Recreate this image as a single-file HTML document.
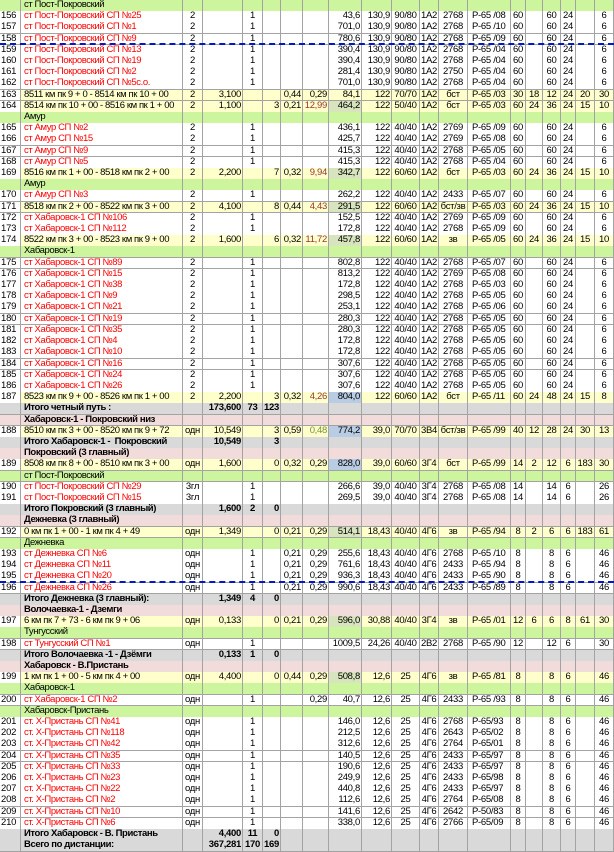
<!DOCTYPE html>
<html><head><meta charset="utf-8"><style>
*{margin:0;padding:0;box-sizing:border-box}
body{width:614px;height:852px;overflow:hidden;background:#fff;font-family:"Liberation Sans",Arial,sans-serif;font-size:9.5px;color:#000;position:relative}
.R{display:grid;grid-template-columns:21px 162px 20px 40px 20px 18px 22px 26px 33px 30px 28px 19px 29px 43px 15px 17px 18px 15px 19px 19px;height:11.21px}
.R i{font-style:normal;border-right:1px solid #a3a3a3;border-bottom:1px solid #a3a3a3;line-height:10.8px;white-space:nowrap;overflow:visible;padding:0 1px;text-align:center;font-size:9.5px;letter-spacing:-0.3px}
.R i:nth-child(1){text-align:left;background:#fff;font-size:9.5px;letter-spacing:-0.2px}
.R i:nth-child(2){text-align:left;padding-left:3px;overflow:visible;position:relative;z-index:1;letter-spacing:-0.4px}
.R i:nth-child(4),.R i:nth-child(6),.R i:nth-child(7),.R i:nth-child(8),.R i:nth-child(9),.R i:nth-child(10){text-align:right}
.R i:nth-child(14){text-align:left;padding-left:4px}
.g i{background:#ccf59e}.y i{background:#ffffcc}.t i{background:#d9d9d9;font-weight:bold}.p i{background:#f2dcdb;font-weight:bold}.w i{background:#fff}
.g i:nth-child(1),.y i:nth-child(1),.w i:nth-child(1){background:#fff}
.t i:nth-child(1){background:#d9d9d9}
.p i:nth-child(1){background:#f2dcdb}
.g i:nth-child(1){background:#ccf59e}
.r{color:#f00}
.R i.d{color:#963634}.R i.dg{color:#76923c}
.R i.hb{background:#b8cce4}.R i.hg{background:#d7e4bd}
.dash{position:absolute;left:0;width:614px;border-top:2px dashed #0018c8;z-index:5}
</style></head><body>
<div class="R g"><i></i><i>ст Пост-Покровский</i><i></i><i></i><i></i><i></i><i></i><i></i><i></i><i></i><i></i><i></i><i></i><i></i><i></i><i></i><i></i><i></i><i></i><i></i></div>
<div class="R w"><i>156</i><i class="r">ст Пост-Покровский СП №25</i><i>2</i><i></i><i>1</i><i></i><i></i><i></i><i>43,6</i><i>130,9</i><i>90/80</i><i>1А2</i><i>2768</i><i>Р-65 /08</i><i>60</i><i></i><i>60</i><i>24</i><i></i><i>6</i></div>
<div class="R w"><i>157</i><i class="r">ст Пост-Покровский СП №1</i><i>2</i><i></i><i>1</i><i></i><i></i><i></i><i>701,0</i><i>130,9</i><i>90/80</i><i>1А2</i><i>2768</i><i>Р-65 /10</i><i>60</i><i></i><i>60</i><i>24</i><i></i><i>6</i></div>
<div class="R w"><i>158</i><i class="r">ст Пост-Покровский СП №9</i><i>2</i><i></i><i>1</i><i></i><i></i><i></i><i>780,6</i><i>130,9</i><i>90/80</i><i>1А2</i><i>2768</i><i>Р-65 /09</i><i>60</i><i></i><i>60</i><i>24</i><i></i><i>6</i></div>
<div class="R w"><i>159</i><i class="r">ст Пост-Покровский СП №13</i><i>2</i><i></i><i>1</i><i></i><i></i><i></i><i>390,4</i><i>130,9</i><i>90/80</i><i>1А2</i><i>2768</i><i>Р-65 /04</i><i>60</i><i></i><i>60</i><i>24</i><i></i><i>6</i></div>
<div class="R w"><i>160</i><i class="r">ст Пост-Покровский СП №19</i><i>2</i><i></i><i>1</i><i></i><i></i><i></i><i>390,4</i><i>130,9</i><i>90/80</i><i>1А2</i><i>2768</i><i>Р-65 /04</i><i>60</i><i></i><i>60</i><i>24</i><i></i><i>6</i></div>
<div class="R w"><i>161</i><i class="r">ст Пост-Покровский СП №2</i><i>2</i><i></i><i>1</i><i></i><i></i><i></i><i>281,4</i><i>130,9</i><i>90/80</i><i>1А2</i><i>2750</i><i>Р-65 /04</i><i>60</i><i></i><i>60</i><i>24</i><i></i><i>6</i></div>
<div class="R w"><i>162</i><i class="r">ст Пост-Покровский СП №5с.о.</i><i>2</i><i></i><i>1</i><i></i><i></i><i></i><i>701,0</i><i>130,9</i><i>90/80</i><i>1А2</i><i>2768</i><i>Р-65 /04</i><i>60</i><i></i><i>60</i><i>24</i><i></i><i>6</i></div>
<div class="R y"><i>163</i><i>8511 км пк 9 + 0 - 8514 км пк 10 + 00</i><i>2</i><i>3,100</i><i></i><i></i><i>0,44</i><i>0,29</i><i>84,1</i><i>122</i><i>70/70</i><i>1А2</i><i>бст</i><i>Р-65 /03</i><i>30</i><i>18</i><i>12</i><i>24</i><i>20</i><i>30</i></div>
<div class="R y"><i>164</i><i>8514 км пк 10 + 00 - 8516 км пк 1 + 00</i><i>2</i><i>1,100</i><i></i><i>3</i><i>0,21</i><i class="d">12,99</i><i class="hg">464,2</i><i>122</i><i>50/40</i><i>1А2</i><i>бст</i><i>Р-65 /03</i><i>60</i><i>24</i><i>36</i><i>24</i><i>15</i><i>10</i></div>
<div class="R g"><i></i><i>Амур</i><i></i><i></i><i></i><i></i><i></i><i></i><i></i><i></i><i></i><i></i><i></i><i></i><i></i><i></i><i></i><i></i><i></i><i></i></div>
<div class="R w"><i>165</i><i class="r">ст Амур СП №2</i><i>2</i><i></i><i>1</i><i></i><i></i><i></i><i>436,1</i><i>122</i><i>40/40</i><i>1А2</i><i>2769</i><i>Р-65 /09</i><i>60</i><i></i><i>60</i><i>24</i><i></i><i>6</i></div>
<div class="R w"><i>166</i><i class="r">ст Амур СП №15</i><i>2</i><i></i><i>1</i><i></i><i></i><i></i><i>425,7</i><i>122</i><i>40/40</i><i>1А2</i><i>2769</i><i>Р-65 /08</i><i>60</i><i></i><i>60</i><i>24</i><i></i><i>6</i></div>
<div class="R w"><i>167</i><i class="r">ст Амур СП №9</i><i>2</i><i></i><i>1</i><i></i><i></i><i></i><i>415,3</i><i>122</i><i>40/40</i><i>1А2</i><i>2768</i><i>Р-65 /05</i><i>60</i><i></i><i>60</i><i>24</i><i></i><i>6</i></div>
<div class="R w"><i>168</i><i class="r">ст Амур СП №5</i><i>2</i><i></i><i>1</i><i></i><i></i><i></i><i>415,3</i><i>122</i><i>40/40</i><i>1А2</i><i>2768</i><i>Р-65 /04</i><i>60</i><i></i><i>60</i><i>24</i><i></i><i>6</i></div>
<div class="R y"><i>169</i><i>8516 км пк 1 + 00 - 8518 км пк 2 + 00</i><i>2</i><i>2,200</i><i></i><i>7</i><i>0,32</i><i class="d">9,94</i><i class="hg">342,7</i><i>122</i><i>60/60</i><i>1А2</i><i>бст</i><i>Р-65 /03</i><i>60</i><i>24</i><i>36</i><i>24</i><i>15</i><i>10</i></div>
<div class="R g"><i></i><i>Амур</i><i></i><i></i><i></i><i></i><i></i><i></i><i></i><i></i><i></i><i></i><i></i><i></i><i></i><i></i><i></i><i></i><i></i><i></i></div>
<div class="R w"><i>170</i><i class="r">ст Амур СП №3</i><i>2</i><i></i><i>1</i><i></i><i></i><i></i><i>262,2</i><i>122</i><i>40/40</i><i>1А2</i><i>2433</i><i>Р-65 /07</i><i>60</i><i></i><i>60</i><i>24</i><i></i><i>6</i></div>
<div class="R y"><i>171</i><i>8518 км пк 2 + 00 - 8522 км пк 3 + 00</i><i>2</i><i>4,100</i><i></i><i>8</i><i>0,44</i><i class="d">4,43</i><i class="hg">291,5</i><i>122</i><i>60/60</i><i>1А2</i><i>бст/зв</i><i>Р-65 /03</i><i>60</i><i>24</i><i>36</i><i>24</i><i>15</i><i>10</i></div>
<div class="R w"><i>172</i><i class="r">ст Хабаровск-1 СП №106</i><i>2</i><i></i><i>1</i><i></i><i></i><i></i><i>152,5</i><i>122</i><i>40/40</i><i>1А2</i><i>2769</i><i>Р-65 /09</i><i>60</i><i></i><i>60</i><i>24</i><i></i><i>6</i></div>
<div class="R w"><i>173</i><i class="r">ст Хабаровск-1 СП №112</i><i>2</i><i></i><i>1</i><i></i><i></i><i></i><i>172,8</i><i>122</i><i>40/40</i><i>1А2</i><i>2768</i><i>Р-65 /09</i><i>60</i><i></i><i>60</i><i>24</i><i></i><i>6</i></div>
<div class="R y"><i>174</i><i>8522 км пк 3 + 00 - 8523 км пк 9 + 00</i><i>2</i><i>1,600</i><i></i><i>6</i><i>0,32</i><i class="d">11,72</i><i class="hg">457,8</i><i>122</i><i>60/60</i><i>1А2</i><i>зв</i><i>Р-65 /05</i><i>60</i><i>24</i><i>36</i><i>24</i><i>15</i><i>10</i></div>
<div class="R g"><i></i><i>Хабаровск-1</i><i></i><i></i><i></i><i></i><i></i><i></i><i></i><i></i><i></i><i></i><i></i><i></i><i></i><i></i><i></i><i></i><i></i><i></i></div>
<div class="R w"><i>175</i><i class="r">ст Хабаровск-1 СП №89</i><i>2</i><i></i><i>1</i><i></i><i></i><i></i><i>802,8</i><i>122</i><i>40/40</i><i>1А2</i><i>2768</i><i>Р-65 /07</i><i>60</i><i></i><i>60</i><i>24</i><i></i><i>6</i></div>
<div class="R w"><i>176</i><i class="r">ст Хабаровск-1 СП №15</i><i>2</i><i></i><i>1</i><i></i><i></i><i></i><i>813,2</i><i>122</i><i>40/40</i><i>1А2</i><i>2769</i><i>Р-65 /08</i><i>60</i><i></i><i>60</i><i>24</i><i></i><i>6</i></div>
<div class="R w"><i>177</i><i class="r">ст Хабаровск-1 СП №38</i><i>2</i><i></i><i>1</i><i></i><i></i><i></i><i>172,8</i><i>122</i><i>40/40</i><i>1А2</i><i>2768</i><i>Р-65 /03</i><i>60</i><i></i><i>60</i><i>24</i><i></i><i>6</i></div>
<div class="R w"><i>178</i><i class="r">ст Хабаровск-1 СП №9</i><i>2</i><i></i><i>1</i><i></i><i></i><i></i><i>298,5</i><i>122</i><i>40/40</i><i>1А2</i><i>2768</i><i>Р-65 /05</i><i>60</i><i></i><i>60</i><i>24</i><i></i><i>6</i></div>
<div class="R w"><i>179</i><i class="r">ст Хабаровск-1 СП №21</i><i>2</i><i></i><i>1</i><i></i><i></i><i></i><i>253,1</i><i>122</i><i>40/40</i><i>1А2</i><i>2768</i><i>Р-65 /06</i><i>60</i><i></i><i>60</i><i>24</i><i></i><i>6</i></div>
<div class="R w"><i>180</i><i class="r">ст Хабаровск-1 СП №19</i><i>2</i><i></i><i>1</i><i></i><i></i><i></i><i>280,3</i><i>122</i><i>40/40</i><i>1А2</i><i>2768</i><i>Р-65 /05</i><i>60</i><i></i><i>60</i><i>24</i><i></i><i>6</i></div>
<div class="R w"><i>181</i><i class="r">ст Хабаровск-1 СП №35</i><i>2</i><i></i><i>1</i><i></i><i></i><i></i><i>280,3</i><i>122</i><i>40/40</i><i>1А2</i><i>2768</i><i>Р-65 /05</i><i>60</i><i></i><i>60</i><i>24</i><i></i><i>6</i></div>
<div class="R w"><i>182</i><i class="r">ст Хабаровск-1 СП №4</i><i>2</i><i></i><i>1</i><i></i><i></i><i></i><i>172,8</i><i>122</i><i>40/40</i><i>1А2</i><i>2768</i><i>Р-65 /05</i><i>60</i><i></i><i>60</i><i>24</i><i></i><i>6</i></div>
<div class="R w"><i>183</i><i class="r">ст Хабаровск-1 СП №10</i><i>2</i><i></i><i>1</i><i></i><i></i><i></i><i>172,8</i><i>122</i><i>40/40</i><i>1А2</i><i>2768</i><i>Р-65 /05</i><i>60</i><i></i><i>60</i><i>24</i><i></i><i>6</i></div>
<div class="R w"><i>184</i><i class="r">ст Хабаровск-1 СП №16</i><i>2</i><i></i><i>1</i><i></i><i></i><i></i><i>307,6</i><i>122</i><i>40/40</i><i>1А2</i><i>2768</i><i>Р-65 /05</i><i>60</i><i></i><i>60</i><i>24</i><i></i><i>6</i></div>
<div class="R w"><i>185</i><i class="r">ст Хабаровск-1 СП №24</i><i>2</i><i></i><i>1</i><i></i><i></i><i></i><i>307,6</i><i>122</i><i>40/40</i><i>1А2</i><i>2768</i><i>Р-65 /05</i><i>60</i><i></i><i>60</i><i>24</i><i></i><i>6</i></div>
<div class="R w"><i>186</i><i class="r">ст Хабаровск-1 СП №26</i><i>2</i><i></i><i>1</i><i></i><i></i><i></i><i>307,6</i><i>122</i><i>40/40</i><i>1А2</i><i>2768</i><i>Р-65 /05</i><i>60</i><i></i><i>60</i><i>24</i><i></i><i>6</i></div>
<div class="R y"><i>187</i><i>8523 км пк 9 + 00 - 8526 км пк 1 + 00</i><i>2</i><i>2,200</i><i></i><i>3</i><i>0,32</i><i class="d">4,26</i><i class="hb">804,0</i><i>122</i><i>60/60</i><i>1А2</i><i>бст</i><i>Р-65 /11</i><i>60</i><i>24</i><i>48</i><i>24</i><i>15</i><i>8</i></div>
<div class="R t"><i></i><i>Итого четный путь :</i><i></i><i>173,600</i><i>73</i><i>123</i><i></i><i></i><i></i><i></i><i></i><i></i><i></i><i></i><i></i><i></i><i></i><i></i><i></i><i></i></div>
<div class="R p"><i></i><i>Хабаровск-1 - Покровский низ</i><i></i><i></i><i></i><i></i><i></i><i></i><i></i><i></i><i></i><i></i><i></i><i></i><i></i><i></i><i></i><i></i><i></i><i></i></div>
<div class="R y"><i>188</i><i>8510 км пк 3 + 00 - 8520 км пк 9 + 72</i><i>одн</i><i>10,549</i><i></i><i>3</i><i>0,59</i><i class="dg">0,48</i><i class="hb">774,2</i><i>39,0</i><i>70/70</i><i>3В4</i><i>бст/зв</i><i>Р-65 /99</i><i>40</i><i>12</i><i>28</i><i>24</i><i>30</i><i>13</i></div>
<div class="R t"><i></i><i>Итого Хабаровск-1 -&nbsp; Покровский</i><i></i><i>10,549</i><i></i><i>3</i><i></i><i></i><i></i><i></i><i></i><i></i><i></i><i></i><i></i><i></i><i></i><i></i><i></i><i></i></div>
<div class="R p"><i></i><i>Покровский (3 главный)</i><i></i><i></i><i></i><i></i><i></i><i></i><i></i><i></i><i></i><i></i><i></i><i></i><i></i><i></i><i></i><i></i><i></i><i></i></div>
<div class="R y"><i>189</i><i>8508 км пк 8 + 00 - 8510 км пк 3 + 00</i><i>одн</i><i>1,600</i><i></i><i>0</i><i>0,32</i><i>0,29</i><i class="hb">828,0</i><i>39,0</i><i>60/60</i><i>3Г4</i><i>бст</i><i>Р-65 /99</i><i>14</i><i>2</i><i>12</i><i>6</i><i>183</i><i>30</i></div>
<div class="R g"><i></i><i>ст Пост-Покровский</i><i></i><i></i><i></i><i></i><i></i><i></i><i></i><i></i><i></i><i></i><i></i><i></i><i></i><i></i><i></i><i></i><i></i><i></i></div>
<div class="R w"><i>190</i><i class="r">ст Пост-Покровский СП №29</i><i>3гл</i><i></i><i>1</i><i></i><i></i><i></i><i>266,6</i><i>39,0</i><i>40/40</i><i>3Г4</i><i>2768</i><i>Р-65 /08</i><i>14</i><i></i><i>14</i><i>6</i><i></i><i>26</i></div>
<div class="R w"><i>191</i><i class="r">ст Пост-Покровский СП №15</i><i>3гл</i><i></i><i>1</i><i></i><i></i><i></i><i>269,5</i><i>39,0</i><i>40/40</i><i>3Г4</i><i>2768</i><i>Р-65 /08</i><i>14</i><i></i><i>14</i><i>6</i><i></i><i>26</i></div>
<div class="R t"><i></i><i>Итого Покровский (3 главный)</i><i></i><i>1,600</i><i>2</i><i>0</i><i></i><i></i><i></i><i></i><i></i><i></i><i></i><i></i><i></i><i></i><i></i><i></i><i></i><i></i></div>
<div class="R p"><i></i><i>Дежневка (3 главный)</i><i></i><i></i><i></i><i></i><i></i><i></i><i></i><i></i><i></i><i></i><i></i><i></i><i></i><i></i><i></i><i></i><i></i><i></i></div>
<div class="R y"><i>192</i><i>0 км пк 1 + 00 - 1 км пк 4 + 49</i><i>одн</i><i>1,349</i><i></i><i>0</i><i>0,21</i><i>0,29</i><i class="hg">514,1</i><i>18,43</i><i>40/40</i><i>4Г6</i><i>зв</i><i>Р-65 /94</i><i>8</i><i>2</i><i>6</i><i>6</i><i>183</i><i>61</i></div>
<div class="R g"><i></i><i>Дежневка</i><i></i><i></i><i></i><i></i><i></i><i></i><i></i><i></i><i></i><i></i><i></i><i></i><i></i><i></i><i></i><i></i><i></i><i></i></div>
<div class="R w"><i>193</i><i class="r">ст Дежневка СП №6</i><i>одн</i><i></i><i>1</i><i></i><i>0,21</i><i>0,29</i><i>255,6</i><i>18,43</i><i>40/40</i><i>4Г6</i><i>2768</i><i>Р-65 /10</i><i>8</i><i></i><i>8</i><i>6</i><i></i><i>46</i></div>
<div class="R w"><i>194</i><i class="r">ст Дежневка СП №11</i><i>одн</i><i></i><i>1</i><i></i><i>0,21</i><i>0,29</i><i>761,6</i><i>18,43</i><i>40/40</i><i>4Г6</i><i>2433</i><i>Р-65 /94</i><i>8</i><i></i><i>8</i><i>6</i><i></i><i>46</i></div>
<div class="R w"><i>195</i><i class="r">ст Дежневка СП №20</i><i>одн</i><i></i><i>1</i><i></i><i>0,21</i><i>0,29</i><i>936,3</i><i>18,43</i><i>40/40</i><i>4Г6</i><i>2433</i><i>Р-65 /90</i><i>8</i><i></i><i>8</i><i>6</i><i></i><i>46</i></div>
<div class="R w"><i>196</i><i class="r">ст Дежневка СП №26</i><i>одн</i><i></i><i>1</i><i></i><i>0,21</i><i>0,29</i><i>990,6</i><i>18,43</i><i>40/40</i><i>4Г6</i><i>2433</i><i>Р-65 /89</i><i>8</i><i></i><i>8</i><i>6</i><i></i><i>46</i></div>
<div class="R t"><i></i><i>Итого Дежневка (3 главный):</i><i></i><i>1,349</i><i>4</i><i>0</i><i></i><i></i><i></i><i></i><i></i><i></i><i></i><i></i><i></i><i></i><i></i><i></i><i></i><i></i></div>
<div class="R p"><i></i><i>Волочаевка-1 - Дземги</i><i></i><i></i><i></i><i></i><i></i><i></i><i></i><i></i><i></i><i></i><i></i><i></i><i></i><i></i><i></i><i></i><i></i><i></i></div>
<div class="R y"><i>197</i><i>6 км пк 7 + 73 - 6 км пк 9 + 06</i><i>одн</i><i>0,133</i><i></i><i>0</i><i>0,21</i><i>0,29</i><i class="hg">596,0</i><i>30,88</i><i>40/40</i><i>3Г4</i><i>зв</i><i>Р-65 /01</i><i>12</i><i>6</i><i>6</i><i>8</i><i>61</i><i>30</i></div>
<div class="R g"><i></i><i>Тунгусский</i><i></i><i></i><i></i><i></i><i></i><i></i><i></i><i></i><i></i><i></i><i></i><i></i><i></i><i></i><i></i><i></i><i></i><i></i></div>
<div class="R w"><i>198</i><i class="r">ст Тунгусский СП №1</i><i>одн</i><i></i><i>1</i><i></i><i></i><i></i><i>1009,5</i><i>24,26</i><i>40/40</i><i>2В2</i><i>2768</i><i>Р-65 /90</i><i>12</i><i></i><i>12</i><i>6</i><i></i><i>30</i></div>
<div class="R t"><i></i><i>Итого Волочаевка -1 - Дзёмги</i><i></i><i>0,133</i><i>1</i><i>0</i><i></i><i></i><i></i><i></i><i></i><i></i><i></i><i></i><i></i><i></i><i></i><i></i><i></i><i></i></div>
<div class="R p"><i></i><i>Хабаровск - В.Пристань</i><i></i><i></i><i></i><i></i><i></i><i></i><i></i><i></i><i></i><i></i><i></i><i></i><i></i><i></i><i></i><i></i><i></i><i></i></div>
<div class="R y"><i>199</i><i>1 км пк 1 + 00 - 5 км пк 4 + 00</i><i>одн</i><i>4,400</i><i></i><i>0</i><i>0,44</i><i>0,29</i><i class="hg">508,8</i><i>12,6</i><i>25</i><i>4Г6</i><i>зв</i><i>Р-65 /81</i><i>8</i><i></i><i>8</i><i>6</i><i></i><i>46</i></div>
<div class="R g"><i></i><i>Хабаровск-1</i><i></i><i></i><i></i><i></i><i></i><i></i><i></i><i></i><i></i><i></i><i></i><i></i><i></i><i></i><i></i><i></i><i></i><i></i></div>
<div class="R w"><i>200</i><i class="r">ст Хабаровск-1 СП №2</i><i>одн</i><i></i><i>1</i><i></i><i></i><i>0,29</i><i>40,7</i><i>12,6</i><i>25</i><i>4Г6</i><i>2433</i><i>Р-65 /93</i><i>8</i><i></i><i>8</i><i>6</i><i></i><i>46</i></div>
<div class="R g"><i></i><i>Хабаровск-Пристань</i><i></i><i></i><i></i><i></i><i></i><i></i><i></i><i></i><i></i><i></i><i></i><i></i><i></i><i></i><i></i><i></i><i></i><i></i></div>
<div class="R w"><i>201</i><i class="r">ст. Х-Пристань СП №41</i><i>одн</i><i></i><i>1</i><i></i><i></i><i></i><i>146,0</i><i>12,6</i><i>25</i><i>4Г6</i><i>2768</i><i>Р-65/93</i><i>8</i><i></i><i>8</i><i>6</i><i></i><i>46</i></div>
<div class="R w"><i>202</i><i class="r">ст. Х-Пристань СП №118</i><i>одн</i><i></i><i>1</i><i></i><i></i><i></i><i>212,5</i><i>12,6</i><i>25</i><i>4Г6</i><i>2643</i><i>Р-65/02</i><i>8</i><i></i><i>8</i><i>6</i><i></i><i>46</i></div>
<div class="R w"><i>203</i><i class="r">ст. Х-Пристань СП №42</i><i>одн</i><i></i><i>1</i><i></i><i></i><i></i><i>312,6</i><i>12,6</i><i>25</i><i>4Г6</i><i>2764</i><i>Р-65/01</i><i>8</i><i></i><i>8</i><i>6</i><i></i><i>46</i></div>
<div class="R w"><i>204</i><i class="r">ст. Х-Пристань СП №35</i><i>одн</i><i></i><i>1</i><i></i><i></i><i></i><i>140,5</i><i>12,6</i><i>25</i><i>4Г6</i><i>2433</i><i>Р-65/97</i><i>8</i><i></i><i>8</i><i>6</i><i></i><i>46</i></div>
<div class="R w"><i>205</i><i class="r">ст. Х-Пристань СП №33</i><i>одн</i><i></i><i>1</i><i></i><i></i><i></i><i>190,6</i><i>12,6</i><i>25</i><i>4Г6</i><i>2433</i><i>Р-65/97</i><i>8</i><i></i><i>8</i><i>6</i><i></i><i>46</i></div>
<div class="R w"><i>206</i><i class="r">ст. Х-Пристань СП №23</i><i>одн</i><i></i><i>1</i><i></i><i></i><i></i><i>249,9</i><i>12,6</i><i>25</i><i>4Г6</i><i>2433</i><i>Р-65/98</i><i>8</i><i></i><i>8</i><i>6</i><i></i><i>46</i></div>
<div class="R w"><i>207</i><i class="r">ст. Х-Пристань СП №22</i><i>одн</i><i></i><i>1</i><i></i><i></i><i></i><i>440,8</i><i>12,6</i><i>25</i><i>4Г6</i><i>2433</i><i>Р-65/97</i><i>8</i><i></i><i>8</i><i>6</i><i></i><i>46</i></div>
<div class="R w"><i>208</i><i class="r">ст. Х-Пристань СП №2</i><i>одн</i><i></i><i>1</i><i></i><i></i><i></i><i>112,6</i><i>12,6</i><i>25</i><i>4Г6</i><i>2764</i><i>Р-65/08</i><i>8</i><i></i><i>8</i><i>6</i><i></i><i>46</i></div>
<div class="R w"><i>209</i><i class="r">ст. Х-Пристань СП №10</i><i>одн</i><i></i><i>1</i><i></i><i></i><i></i><i>141,6</i><i>12,6</i><i>25</i><i>4Г6</i><i>2642</i><i>Р-50/83</i><i>8</i><i></i><i>8</i><i>6</i><i></i><i>46</i></div>
<div class="R w"><i>210</i><i class="r">ст. Х-Пристань СП №6</i><i>одн</i><i></i><i>1</i><i></i><i></i><i></i><i>338,0</i><i>12,6</i><i>25</i><i>4Г6</i><i>2766</i><i>Р-65/09</i><i>8</i><i></i><i>8</i><i>6</i><i></i><i>46</i></div>
<div class="R t"><i></i><i>Итого Хабаровск - В. Пристань</i><i></i><i>4,400</i><i>11</i><i>0</i><i></i><i></i><i></i><i></i><i></i><i></i><i></i><i></i><i></i><i></i><i></i><i></i><i></i><i></i></div>
<div class="R t"><i></i><i>Всего по дистанции:</i><i></i><i>367,281</i><i>170</i><i>169</i><i></i><i></i><i></i><i></i><i></i><i></i><i></i><i></i><i></i><i></i><i></i><i></i><i></i><i></i></div>
<div class="dash" style="top:43px"></div>
<div class="dash" style="top:581px"></div>
</body></html>
